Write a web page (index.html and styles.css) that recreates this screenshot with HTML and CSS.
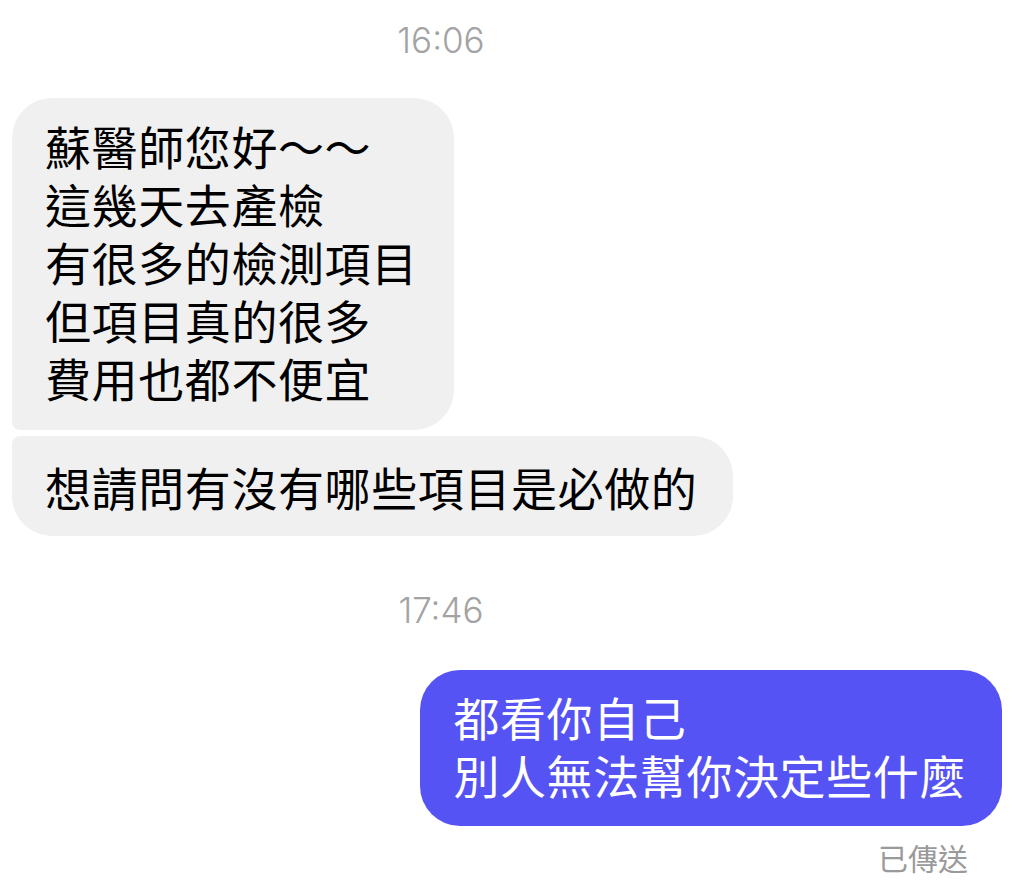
FILE: index.html
```html
<!DOCTYPE html>
<html lang="zh-Hant">
  <head>
    <meta charset="UTF-8" />
    <title>訊息</title>
    <link rel="stylesheet" href="styles.css">
  </head>
  <body>
    <div id="chat">
      <div class="time">16:06</div>
      <div class="bubble in first">
        蘇醫師您好～～<br />
        這幾天去產檢<br />
        有很多的檢測項目<br />
        但項目真的很多<br />
        費用也都不便宜
      </div>
      <div class="bubble in last">想請問有沒有哪些項目是必做的</div>

      <div class="time second">17:46</div>
      <div class="bubble out">
        都看你自己<br />
        別人無法幫你決定些什麼
      </div>
      <div class="status">已傳送</div>
    </div>
  </body>
</html>
```

FILE: styles.css
```css
* {
  box-sizing: border-box;
}
html,
body {
  margin: 0;
  padding: 0;
  background: #fff;
  font-family: 'Noto Sans CJK TC', 'Noto Sans', sans-serif;
}
#chat {
  display: flex;
  flex-direction: column;
  align-items: flex-start;
  padding: 0 22px 0 12px;
}
.time {
  align-self: center;
  margin: 20px 132px 38px 0;
  font-family: Inter, 'Noto Sans', sans-serif;
  font-size: 35px;
  font-weight: 300;
  line-height: 40px;
  color: #a3a3a3;
}
.time.second {
  margin: 54px 132px 40px 0;
}
.bubble {
  padding: 21px 36px 21px 33px;
  font-size: 46px;
  line-height: 58px;
  letter-spacing: 0.6px;
  border-radius: 40px;
}
.bubble.in {
  background: #f0f0f0;
  color: #000;
}
.bubble.first {
  padding-top: 18px;
  padding-bottom: 24px;
  border-bottom-left-radius: 8px;
  margin-bottom: 6px;
}
.bubble.last {
  border-top-left-radius: 8px;
}
.bubble.out {
  align-self: flex-end;
  padding: 17px 36px 23px 33px;
  background: #5653f4;
  color: #fff;
}
.status {
  align-self: flex-end;
  margin: 13px 34px 0 0;
  font-size: 30px;
  line-height: 36px;
  color: #9a9a9a;
}
```
